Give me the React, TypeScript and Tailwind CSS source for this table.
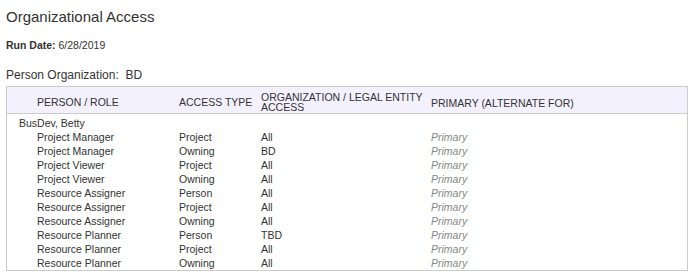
import React from "react";

interface AccessRow {
  role: string;
  accessType: string;
  orgAccess: string;
  primary: string;
}

const ROWS: AccessRow[] = [
  { role: "Project Manager", accessType: "Project", orgAccess: "All", primary: "Primary" },
  { role: "Project Manager", accessType: "Owning", orgAccess: "BD", primary: "Primary" },
  { role: "Project Viewer", accessType: "Project", orgAccess: "All", primary: "Primary" },
  { role: "Project Viewer", accessType: "Owning", orgAccess: "All", primary: "Primary" },
  { role: "Resource Assigner", accessType: "Person", orgAccess: "All", primary: "Primary" },
  { role: "Resource Assigner", accessType: "Project", orgAccess: "All", primary: "Primary" },
  { role: "Resource Assigner", accessType: "Owning", orgAccess: "All", primary: "Primary" },
  { role: "Resource Planner", accessType: "Person", orgAccess: "TBD", primary: "Primary" },
  { role: "Resource Planner", accessType: "Project", orgAccess: "All", primary: "Primary" },
  { role: "Resource Planner", accessType: "Owning", orgAccess: "All", primary: "Primary" },
];

const COLS = "grid grid-cols-[142px_82px_170px_1fr] pl-[30px]";

export default function App() {
  return (
    <div className="min-h-screen bg-white px-[6px] pt-[8px] text-[#333] font-['Liberation_Sans',Arial,sans-serif]">
      <h1 className="text-[15px] leading-[18px] font-normal">Organizational Access</h1>

      <div className="mt-[12px] text-[10.5px] leading-[14px]">
        <span className="font-bold">Run Date:</span> 6/28/2019
      </div>

      <div className="mt-[15px] text-[12px] leading-[16px] whitespace-pre">Person Organization:  BD</div>

      {/* Access table */}
      <div className="mt-[3px] w-[682px] border border-[#cccccc] text-[10.5px]">
        <div className={`${COLS} h-[27px] pt-[4px] items-center bg-[#f3f1fd] border-b border-[#cccccc] uppercase`}>
          <div className="leading-[12px]">Person / Role</div>
          <div className="leading-[12px]">Access Type</div>
          <div className="leading-[10px] whitespace-nowrap">
            Organization / Legal Entity
            <br />
            Access
          </div>
          <div className="leading-[12px] pt-[1px]">Primary (Alternate For)</div>
        </div>

        <div className="pt-[2px] leading-[14px]">
          <div className="pl-[12px]">BusDev, Betty</div>
          {ROWS.map((r, i) => (
            <div key={i} className={COLS}>
              <div>{r.role}</div>
              <div>{r.accessType}</div>
              <div>{r.orgAccess}</div>
              <div className="italic text-[#888]">{r.primary}</div>
            </div>
          ))}
        </div>
      </div>
    </div>
  );
}
